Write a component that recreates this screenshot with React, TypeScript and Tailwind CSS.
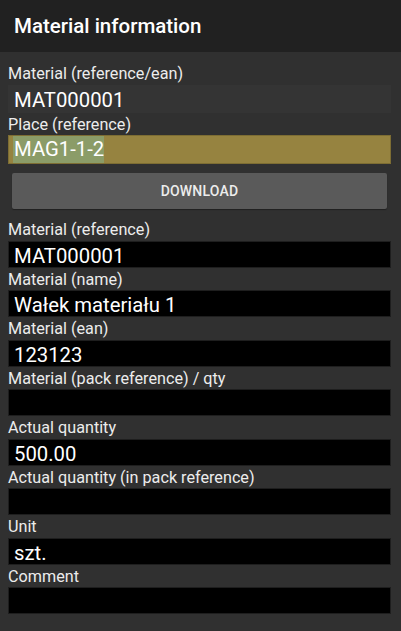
import React from "react";

const font = { fontFamily: "Roboto, 'Noto Sans', sans-serif" };

function Label({ children }: { children: React.ReactNode }) {
  return (
    <div className="h-[22.5px] text-[16.2px] leading-[23px] text-[#ececec] whitespace-nowrap">
      {children}
    </div>
  );
}

function Field({ value }: { value?: string }) {
  return (
    <div className="h-[27px] bg-black border border-[#1e1e1e] pl-[5px] text-[20.3px] leading-[27px] text-white pt-[1px] whitespace-nowrap overflow-hidden">
      {value ?? ""}
    </div>
  );
}

export default function App() {
  const rows: [string, string][] = [
    ["Material (reference)", "MAT000001"],
    ["Material (name)", "Wałek materiału 1"],
    ["Material (ean)", "123123"],
    ["Material (pack reference) / qty", ""],
    ["Actual quantity", "500.00"],
    ["Actual quantity (in pack reference)", ""],
    ["Unit", "szt."],
    ["Comment", ""],
  ];
  return (
    <div style={font} className="w-[401px] h-[631px] bg-[#303030] flex flex-col overflow-hidden">
      <div className="h-[52px] bg-[#212121] flex items-center pl-[14px] shrink-0">
        <span className="text-[20.5px] font-medium text-white leading-none">Material information</span>
      </div>
      <div className="pl-[8px] pr-[10px] pt-[10px] flex flex-col">
        <Label>Material (reference/ean)</Label>
        <div className="h-[28px] bg-[#343434] pl-[6px] text-[20.3px] leading-[28px] pt-[1px] text-white">
          MAT000001
        </div>
        <Label>Place (reference)</Label>
        <div className="h-[29px] bg-[#968340] border border-[#7d6d33] pl-[4px] flex items-center">
          <span className="bg-[#8b9c68] text-[20.3px] leading-[27px] text-white pl-[1px]">MAG1-1-2</span>
        </div>
        <div className="mt-[9px] mx-[4px] h-[36px] bg-[#5a5a5a] rounded-[2px] flex items-center justify-center shadow-[0_1px_1px_rgba(0,0,0,0.35)]">
          <span className="text-[14px] font-medium text-[#ececec] tracking-[0.2px]">DOWNLOAD</span>
        </div>
        <div className="h-[9px]" />
        {rows.map(([l, v]) => (
          <div key={l} className="flex flex-col">
            <Label>{l}</Label>
            <Field value={v} />
          </div>
        ))}
      </div>
    </div>
  );
}
